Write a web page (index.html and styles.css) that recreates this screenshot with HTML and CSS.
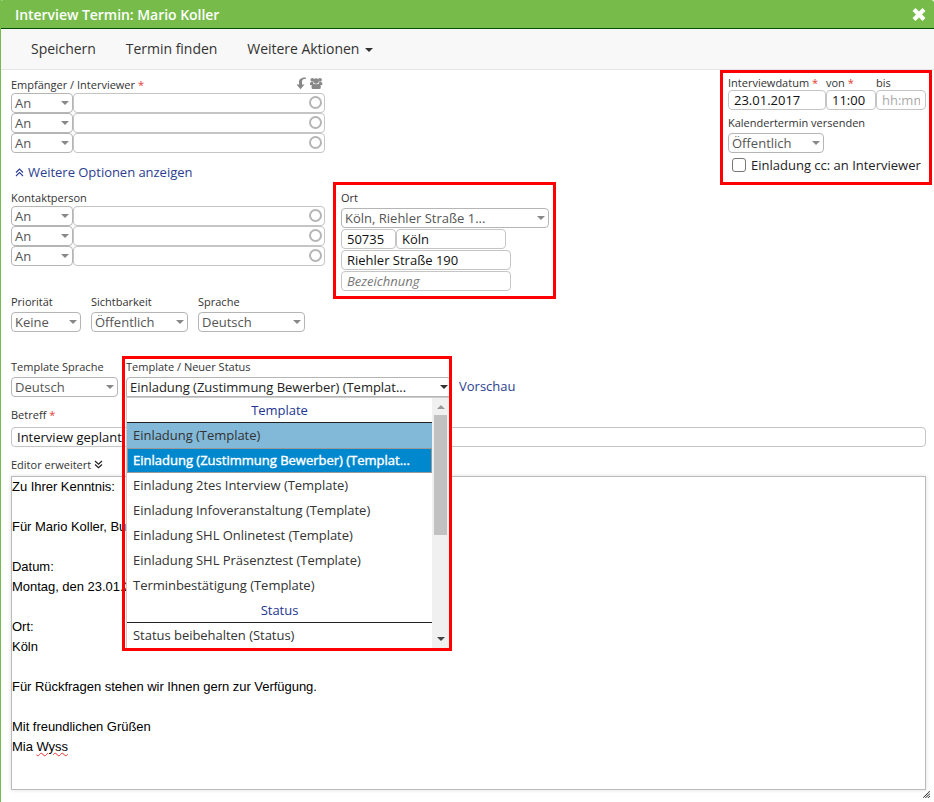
FILE: index.html
```html
<!DOCTYPE html>
<html lang="de">
<head>
<meta charset="utf-8">
<title>Interview Termin</title>
<link rel="stylesheet" href="styles.css">
</head>
<body>
<div class="dialog">
  <header class="titlebar">
    <span class="title">Interview Termin: Mario Koller</span>
    <svg class="close" width="14" height="13" viewBox="0 0 14 13"><path d="M2 1.5 12 11.5M12 1.5 2 11.5" stroke="#fff" stroke-width="4.2"/></svg>
  </header>
  <nav class="toolbar">
    <span class="t1">Speichern</span>
    <span class="t2">Termin finden</span>
    <span class="t3">Weitere Aktionen</span><i class="caret dark"></i>
  </nav>
  <main class="content">
    <section class="top">
      <div class="people">
        <div class="label-row">
          <span class="label">Empfänger / Interviewer <b class="req">*</b></span>
          <svg class="tools" width="27" height="13" viewBox="0 0 27 13" fill="#888">
            <path d="M10 .5C5.500 .3 3 2 3 5V7.500H.5L4.500 12.300 8.500 7.500H6V5C6 2.800 7 1.800 10 1.700Z"/>
            <circle cx="16.300" cy="2.800" r="1.900"/><circle cx="24" cy="2.800" r="1.900"/><circle cx="20.100" cy="4" r="2.700"/>
            <path d="M14 8V6.500Q14 5 15.300 5H17Q17.500 7 18 7.500L16.500 8.500ZM26.300 8V6.500Q26.300 5 25 5H23.300Q22.800 7 22.300 7.500L23.800 8.500Z"/>
            <path d="M15.500 10.500Q15.500 7 18 7L20.100 7.300 22.300 7Q24.800 7 24.800 10.500 24.800 12 23.300 12H17Q15.500 12 15.500 10.500Z"/>
          </svg>
        </div>
        <div class="row"><div class="select w62">An<i class="caret"></i></div><div class="input person"><i class="ring"></i></div></div>
        <div class="row"><div class="select w62">An<i class="caret"></i></div><div class="input person"><i class="ring"></i></div></div>
        <div class="row"><div class="select w62">An<i class="caret"></i></div><div class="input person"><i class="ring"></i></div></div>
        <div class="more"><svg width="9" height="9" viewBox="0 0 9 9" fill="none" stroke="#2c3e91" stroke-width="1.100"><path d="M1 4.500 4.500 1 8 4.500M1 8 4.500 4.500 8 8"/></svg>Weitere Optionen anzeigen</div>
        <div class="label contact">Kontaktperson</div>
        <div class="row"><div class="select w62">An<i class="caret"></i></div><div class="input person"><i class="ring"></i></div></div>
        <div class="row"><div class="select w62">An<i class="caret"></i></div><div class="input person"><i class="ring"></i></div></div>
        <div class="row"><div class="select w62">An<i class="caret"></i></div><div class="input person"><i class="ring"></i></div></div>
      </div>
      <div class="frame place">
        <div class="label">Ort</div>
        <div class="select w208">Köln, Riehler Straße 1...<i class="caret"></i></div>
        <div class="row"><div class="input w55">50735</div><div class="input w110">Köln</div></div>
        <div class="input w170">Riehler Straße 190</div>
        <div class="input w170 hint">Bezeichnung</div>
      </div>
      <div class="frame schedule">
        <div class="dates">
          <div><div class="label">Interviewdatum <b class="req">*</b></div><div class="input w98">23.01.2017</div></div>
          <div><div class="label">von <b class="req">*</b></div><div class="input w50">11:00</div></div>
          <div><div class="label">bis</div><div class="input w50 empty"><span>hh:mm</span></div></div>
        </div>
        <div class="label send">Kalendertermin versenden</div>
        <div class="select w96">Öffentlich<i class="caret"></i></div>
        <div class="check"><i class="box"></i>Einladung cc: an Interviewer</div>
      </div>
    </section>
    <section class="options">
      <div><div class="label">Priorität</div><div class="select w70">Keine<i class="caret"></i></div></div>
      <div><div class="label">Sichtbarkeit</div><div class="select w97">Öffentlich<i class="caret"></i></div></div>
      <div><div class="label">Sprache</div><div class="select w107">Deutsch<i class="caret"></i></div></div>
    </section>
    <section class="templates">
      <div><div class="label">Template Sprache</div><div class="select w107">Deutsch<i class="caret"></i></div></div>
      <div class="status">
        <div class="label">Template / Neuer Status</div>
        <div class="select active">Einladung (Zustimmung Bewerber) (Templat...<i class="caret dark"></i></div>
        <div class="menu">
          <div class="list">
            <div class="group">Template</div>
            <div class="item chosen">Einladung (Template)</div>
            <div class="item hover">Einladung (Zustimmung Bewerber) (Templat...</div>
            <div class="item">Einladung 2tes Interview (Template)</div>
            <div class="item">Einladung Infoveranstaltung (Template)</div>
            <div class="item">Einladung SHL Onlinetest (Template)</div>
            <div class="item">Einladung SHL Präsenztest (Template)</div>
            <div class="item">Terminbestätigung (Template)</div>
            <div class="group">Status</div>
            <div class="item">Status beibehalten (Status)</div>
          </div>
          <div class="scroll"><i class="up"></i><i class="thumb"></i><i class="down"></i></div>
        </div>
        <div class="frame marker"></div>
      </div>
      <span class="preview">Vorschau</span>
    </section>
    <div class="label subject">Betreff <b class="req">*</b></div>
    <div class="input">Interview geplant</div>
    <div class="label editor-label">Editor erweitert <svg width="9" height="9" viewBox="0 0 9 9" fill="none" stroke="#222" stroke-width="1.200"><path d="M1 1 4.500 4.200 8 1M1 4.500 4.500 7.700 8 4.500"/></svg></div>
    <div class="editor">
      <p>Zu Ihrer Kenntnis:</p>
      <p>Für Mario Koller, Bu</p>
      <p>Datum:<br>Montag, den 23.01.2</p>
      <p>Ort:<br>Köln</p>
      <p>Für Rückfragen stehen wir Ihnen gern zur Verfügung.</p>
      <p>Mit freundlichen Grüßen<br>Mia <span class="typo">Wyss</span></p>
    </div>
    <svg class="grip" width="7" height="7" viewBox="0 0 7 7" stroke="#222" stroke-width="1.100" stroke-dasharray="1 .5"><path d="M0 7 7 0M2.500 7 7 2.500M5 7 7 5"/></svg>
  </main>
</div>
</body>
</html>
```
FILE: styles.css
```css
* { box-sizing: border-box; }
body { margin: 0; background: #fff; font: 13px/18px "Open Sans", sans-serif; color: #333; }
.dialog { width: 934px; height: 802px; border-left: 1px solid #77bc4a; overflow: hidden; }
.titlebar { height: 29px; margin-left: -1px; padding: 0 8px 0 15px; display: flex; align-items: center; justify-content: space-between; background: #77bc4a; border-bottom: 1px solid #064d06; border-radius: 3px 3px 0 0; color: #fff; font-size: 14px; font-weight: 600; letter-spacing: -.04px; }
.title { padding-top: 1px; }
.toolbar { height: 41px; display: flex; align-items: center; background: #f8f8f8; border-bottom: 1px solid #e5e5e5; padding-left: 30px; font-size: 14px; letter-spacing: -.03px; }
.toolbar .t2, .toolbar .t3 { margin-left: 30px; }
.toolbar .caret { margin-left: 6px; margin-top: 2px; }
.content { padding: 0 8px 0 10px; }
.top { display: flex; height: 229px; margin-right: -6px; }
.people { width: 314px; }
.row { display: flex; }
.label-row { display: flex; justify-content: space-between; height: 23px; padding: 7px 2px 0 0; }
.label { font-size: 11px; line-height: 15px; white-space: nowrap; }
.req { font-weight: 400; color: #e23b2e; }
.select, .input { height: 20px; border: 1px solid #c5c5c5; border-radius: 4px; background: #fff; line-height: 18px; white-space: nowrap; }
.select { display: flex; justify-content: space-between; align-items: center; padding: 0 3px; color: #555; border-color: #b5b5b5; }
.input { padding: 0 5px; color: #111; }
.caret { flex: none; width: 0; height: 0; border: 4px solid transparent; border-top-color: #888; border-bottom: 0; }
.caret.dark { border-top-color: #333; }
.person { flex: 1; display: flex; justify-content: flex-end; align-items: flex-start; padding: 2px 2px 0; }
.ring { width: 13px; height: 13px; border: 2px solid #b5b5b5; border-radius: 50%; }
.w62 { width: 62px; } .w208 { width: 208px; } .w55 { width: 55px; } .w110 { width: 110px; } .w170 { width: 170px; } .w98 { width: 98px; } .w50 { width: 50px; } .w96 { width: 96px; } .w70 { width: 70px; } .w97 { width: 97px; } .w107 { width: 107px; }
.more { height: 18px; margin-top: 10px; padding-left: 4px; color: #2c3e91; letter-spacing: -.03px; }
.more svg { margin-right: 4px; }
.contact { margin: 9px 0 1px; }
.frame { border: 3px solid #f00; }
.place { width: 223px; height: 117px; margin: 112px 0 0 8px; padding: 5px; }
.place .select { margin: 3px 0 1px; }
.place .row { gap: 0; margin-bottom: 1px; }
.place .w170 { margin-bottom: 1px; }
.hint { color: #777; font-style: italic; }
.schedule { width: 212px; height: 115px; margin-left: auto; padding: 2px 0 0 5px; }
.dates { display: flex; }
.empty { color: #aaa; }
.empty span { display: block; overflow: hidden; }
.send { margin: 5px 0 3px; }
.check { display: flex; align-items: center; margin-top: 3px; color: #222; padding-left: 4px; }
.box { width: 14px; height: 14px; border: 1px solid #777; border-radius: 3px; margin-right: 5px; }
.options { display: flex; gap: 10px; margin-top: -5px; }
.options .label { margin-bottom: 3px; }
.templates { display: flex; margin-top: 27px; }
.templates .label { margin-bottom: 3px; }
.status { position: relative; width: 325px; margin-left: 8px; }
.active { color: #222; border-radius: 4px 4px 0 0; padding-right: 2px; letter-spacing: -.02px; }
.preview { margin: 18px 0 0 8px; color: #2c3e91; }
.menu { position: absolute; z-index: 2; left: 0; top: 38px; width: 323px; height: 251px; display: flex; border: 1px solid #ccc; border-width: 1px 0 0 1px; background: #fff; overflow: hidden; letter-spacing: -.03px; }
.list { flex: 1; }
.group { height: 25px; border-bottom: 1px solid #222; color: #22368f; text-align: center; line-height: 25px; }
.item { height: 25px; padding-left: 6px; line-height: 24px; white-space: nowrap; }
.chosen { background: #82b9d9; }
.hover { background: #0088cf; color: #fff; border: 1px solid #999; padding-left: 5px; line-height: 22px; letter-spacing: 0; -webkit-text-stroke: .4px #fff; }
.scroll { width: 17px; background: #f0f0f0; display: flex; flex-direction: column; align-items: center; }
.up { border: 4px solid transparent; border-top: 0; border-bottom-color: #999; margin-top: 7px; }
.thumb { width: 13px; height: 120px; margin-top: 6px; background: #c1c1c1; }
.down { border: 4px solid transparent; border-bottom: 0; border-top-color: #444; margin: auto 0 7px; }
.marker { position: absolute; z-index: 3; left: -4px; top: -3px; width: 330px; height: 295px; }
.subject { margin: 10px 0 5px; }
.editor-label { margin: 10px 0 4px; }
.editor { height: 314px; border: 1px solid #bbb; box-shadow: 0 0 4px #ddd; font: 13px/20px "Liberation Sans", sans-serif; color: #000; letter-spacing: -.03px; }
.editor p { margin: 0 0 20px; }
.typo { text-decoration: underline wavy #e33 1px; }
.grip { display: block; margin: 1px -4px 0 auto; }
```
